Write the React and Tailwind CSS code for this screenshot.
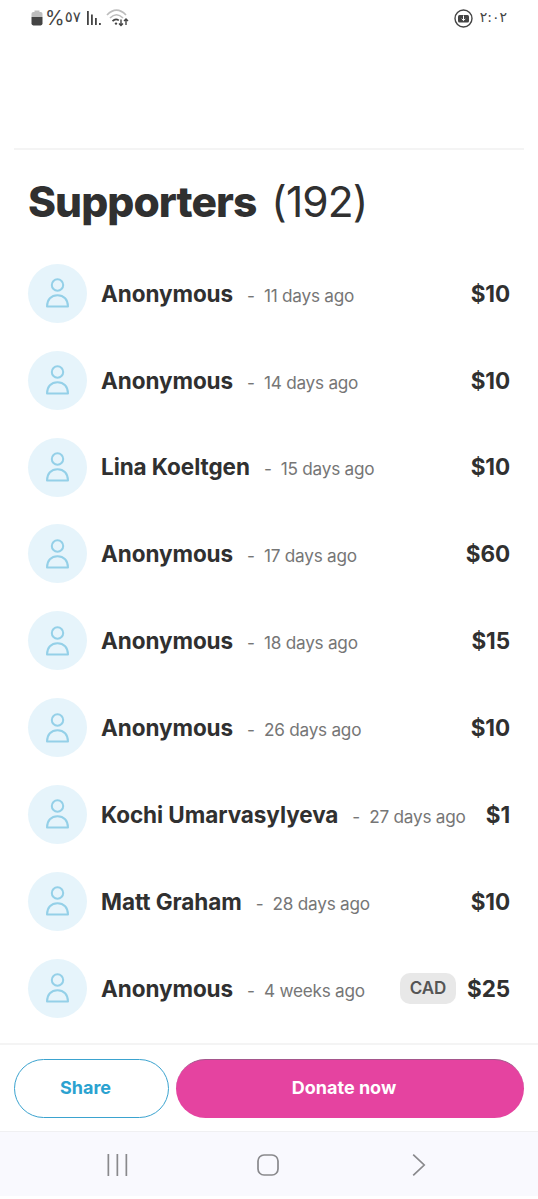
const supporters = [
  { name: "Anonymous", time: "11 days ago", amount: "$10" },
  { name: "Anonymous", time: "14 days ago", amount: "$10" },
  { name: "Lina Koeltgen", time: "15 days ago", amount: "$10" },
  { name: "Anonymous", time: "17 days ago", amount: "$60" },
  { name: "Anonymous", time: "18 days ago", amount: "$15" },
  { name: "Anonymous", time: "26 days ago", amount: "$10" },
  { name: "Kochi Umarvasylyeva", time: "27 days ago", amount: "$1" },
  { name: "Matt Graham", time: "28 days ago", amount: "$10" },
  { name: "Anonymous", time: "4 weeks ago", amount: "$25", currency: "CAD" },
];

const StatusBar = () => (
  <div className="flex h-9 items-center justify-between pr-[31px] pl-[31px] text-[#444]">
    <div className="flex items-center">
      <svg width="12" height="16" viewBox="0 0 12 16">
        <path d="M3.5 0.5h5V2h1.2q1.8 0 1.8 1.8V7H0.5V3.8Q0.5 2 2.3 2h1.2z" fill="#bdbdbd" />
        <path d="M0.5 7h11v6.6q0 1.8-1.8 1.8H2.3q-1.8 0-1.8-1.8z" fill="#444" />
      </svg>
      <span className="ml-[2px] text-[20px] leading-none">%</span>
      <span className="pb-[2px] font-['DejaVu_Sans',sans-serif] text-[15px] leading-none">٥٧</span>
      <svg className="ml-[6px]" width="15" height="16" viewBox="0 0 15 16" fill="#444">
        <rect x="0" y="1" width="1.8" height="14" />
        <rect x="4" y="4.5" width="1.8" height="10.5" />
        <rect x="8" y="8" width="1.8" height="7" />
        <rect x="12" y="13" width="1.8" height="2" />
      </svg>
      {/* Wifi with traffic arrows */}
      <svg className="ml-[4px]" width="23" height="18" viewBox="0 0 23 18" fill="none" strokeWidth="1.7">
        <path d="M1 6Q10.5-3.5 20 6" stroke="#bdbdbd" />
        <path d="M4 9Q10.5 2.5 17 9" stroke="#bdbdbd" />
        <path d="M6.5 12.2Q9.5 9 12.8 11.4" stroke="#444" />
        <circle cx="10" cy="14.6" r="1.2" fill="#444" />
        <path d="M15 10.5v6M13 14.5l2 2 2-2M20 16v-6M18 12l2-2 2 2" stroke="#444" strokeWidth="1.4" />
      </svg>
    </div>
    <div className="flex items-center gap-[7px]">
      <svg width="19" height="19" viewBox="0 0 19 19">
        <circle cx="9.5" cy="9.5" r="8.5" fill="none" stroke="#444" strokeWidth="1.4" />
        <rect x="4" y="6" width="11" height="7.5" rx="1.5" fill="#444" />
        <path d="M9.5 6.5v5M7.7 9.8l1.8 1.8 1.8-1.8" fill="none" stroke="#fff" strokeWidth="1" />
      </svg>
      <span className="pb-[2px] font-['DejaVu_Sans',sans-serif] text-[14px] leading-none">٢:٠٢</span>
    </div>
  </div>
);

const Avatar = () => (
  <div className="flex size-[59px] shrink-0 items-center justify-center rounded-full bg-[#e6f4fb]">
    <svg width="23" height="30" viewBox="0 0 23 30" fill="none" stroke="#94d0e8" strokeWidth="2" strokeLinejoin="round">
      <circle cx="11.5" cy="7" r="5.7" />
      <path d="M1 28.6C1 21.5 5.2 17.2 11.5 17.2S22 21.5 22 28.6Z" />
    </svg>
  </div>
);

const SupporterRow = ({ name, time, amount, currency }) => (
  <li className="flex h-[86.85px] items-center">
    <Avatar />
    <div className="ml-[14px] flex items-baseline whitespace-nowrap pt-[0.5px]">
      <span className="text-[22.5px] font-[650] tracking-[-0.07px]">{name}</span>
      <span className="ml-[14px] text-[17.2px] text-[#767676]">-</span>
      <span className="ml-[9px] text-[17.2px] tracking-[-0.25px] text-[#767676]">{time}</span>
    </div>
    <div className="ml-auto flex items-center gap-[11px]">
      {currency && (
        <span className="flex h-[31px] w-[56px] items-center justify-center rounded-[10px] bg-[#e8e8e8] pt-[1px] text-[17px] font-semibold text-[#555]">
          {currency}
        </span>
      )}
      <span className="pt-[0.5px] text-[22.5px] font-[650] tracking-[-0.1px]">{amount}</span>
    </div>
  </li>
);

const NavBar = () => (
  <nav className="flex h-[65px] items-center border-t border-[#f0f0f2] bg-[#f9f9fe] pt-[2px] pl-[107px]">
    <svg width="21" height="22" viewBox="0 0 21 22" fill="#89898c">
      <rect x="0.5" y="0" width="1.7" height="22" />
      <rect x="9.5" y="0" width="1.7" height="22" />
      <rect x="18.5" y="0" width="1.7" height="22" />
    </svg>
    <svg className="ml-[129px]" width="22" height="22" viewBox="0 0 22 22" fill="none" stroke="#89898c" strokeWidth="1.7">
      <rect x="1" y="1" width="20" height="20" rx="6" />
    </svg>
    <svg className="ml-[133px]" width="14" height="22" viewBox="0 0 14 22" fill="none" stroke="#89898c" strokeWidth="1.7">
      <path d="M1.2 0.7L12.2 11 1.2 21.3" />
    </svg>
  </nav>
);

export default function App() {
  return (
    <div className="flex h-[1199px] w-[538px] flex-col overflow-hidden bg-white font-['Inter',sans-serif] text-[#303030]">
      <StatusBar />

      <main className="mx-[14px] mt-[112px] h-[895px] border-t-2 border-[#f4f4f4] px-[14px]">
        <h1 className="mt-[26px] text-[42.5px] leading-[52px] whitespace-nowrap">
          <span className="font-[780] tracking-[-0.95px]">Supporters</span>
          <span className="ml-[15px] font-[380] tracking-[-0.9px]">(192)</span>
        </h1>
        <ul className="mt-[22px]">
          {supporters.map((supporter, i) => (
            <SupporterRow key={i} {...supporter} />
          ))}
        </ul>
      </main>

      {/* Sticky actions */}
      <div className="flex h-[88px] shrink-0 gap-[7px] border-t-2 border-[#f4f4f4] px-[14px] pt-[14px]">
        <button className="h-[59px] w-[155px] rounded-full border border-[#3ba3cf] pr-3 pb-[2px] text-[18px] font-bold text-[#2ba2d0]">
          Share
        </button>
        <button className="h-[59px] flex-1 rounded-full border-t border-[#a5568c] bg-[#e543a0] pr-3 pb-[3px] text-[18px] font-bold text-white">
          Donate now
        </button>
      </div>

      <NavBar />
    </div>
  );
}
